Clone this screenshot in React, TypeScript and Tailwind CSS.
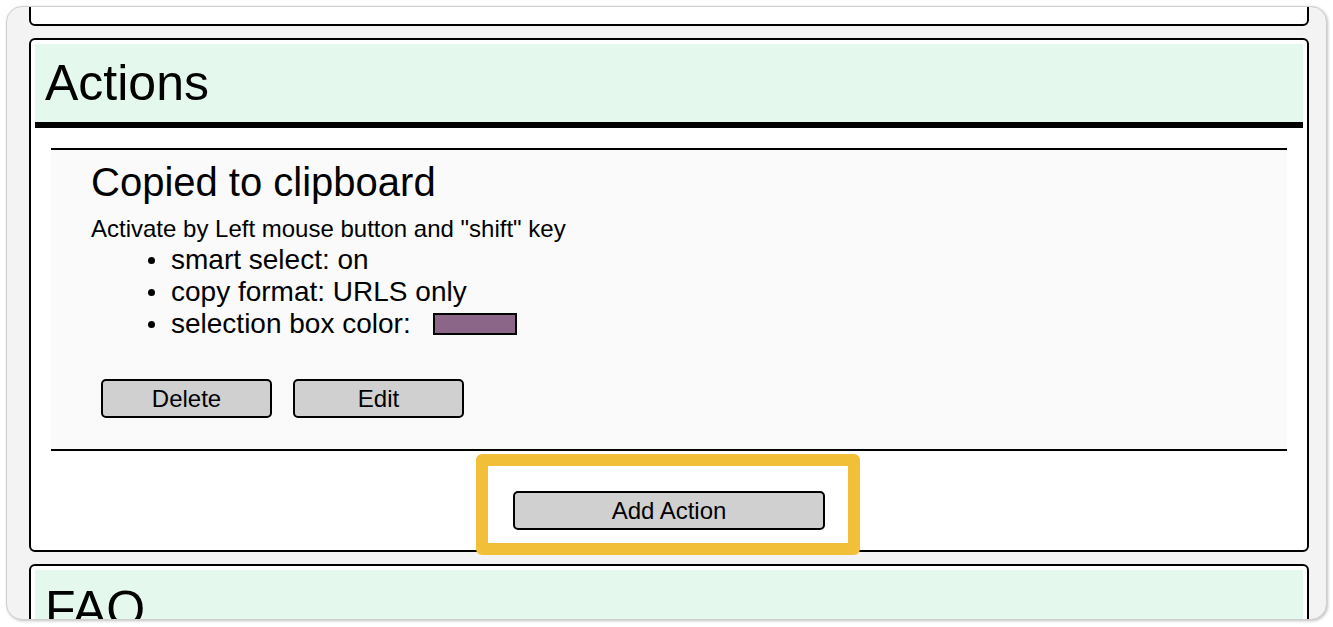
import React from "react";

const font = { fontFamily: "'Liberation Sans', Arial, sans-serif" };

function Bullet({ children }: { children: React.ReactNode }) {
  return (
    <li className="flex items-center h-[32px]">
      <span className="w-[7px] h-[7px] rounded-full bg-black ml-[57px] mr-[16px] shrink-0" />
      {children}
    </li>
  );
}

function Btn({ children, w }: { children: React.ReactNode; w: string }) {
  return (
    <button
      className={`${w} h-[39px] border-2 border-black rounded-[5px] bg-[#d0d0d0] text-[24px] leading-[35px] text-black text-center`}
    >
      {children}
    </button>
  );
}

export default function App() {
  return (
    <div className="w-[1333px] h-[627px] bg-white pt-[6px] pl-[6px] pr-[6px] pb-[7px]" style={font}>
      <div className="h-full rounded-[16px] border border-[#cfcfcf] bg-[#f3f3f3] overflow-hidden shadow-[1px_1px_3px_rgba(0,0,0,0.25)] pl-[22px] pr-[17px]">
        {/* top card, scrolled mostly out of view */}
        <div className="h-[100px] -mt-[81px] border-2 border-black rounded-[6px] bg-white" />

        {/* Actions card */}
        <div className="mt-[12px] border-2 border-black rounded-[6px] bg-white p-[4px]">
          <div className="h-[84px] bg-[#e4f8ee] border-b-[6px] border-black pl-[10px]">
            <h1 className="text-[50px] leading-[78px] text-black">Actions</h1>
          </div>

          <div className="mt-[20px] mx-[16px] border-t-2 border-b-2 border-black bg-[#fafafa] pt-[9px] pb-[31px] pl-[40px]">
            <h2 className="text-[40px] leading-[46px] text-black">Copied to clipboard</h2>
            <p className="mt-[10px] text-[24px] leading-[28px] text-black">
              Activate by Left mouse button and "shift" key
            </p>
            <ul className="mt-[1px] text-[28px] leading-[32px] text-black">
              <Bullet>smart select: on</Bullet>
              <Bullet>copy format: URLS only</Bullet>
              <Bullet>
                selection box color:
                <span className="inline-block ml-[22px] w-[84px] h-[22px] border-2 border-black bg-[#8b6688]" />
              </Bullet>
            </ul>
            <div className="mt-[39px] ml-[10px] flex gap-[21px]">
              <Btn w="w-[171px]">Delete</Btn>
              <Btn w="w-[171px]">Edit</Btn>
            </div>
          </div>

          <div className="flex justify-center mt-[40px] mb-[16px]">
            <div className="relative">
              <Btn w="w-[312px]">Add Action</Btn>
              <div className="absolute left-[-37px] top-[-37px] w-[384px] h-[101px] border-[12px] border-[#f2c038] rounded-[6px] z-10 pointer-events-none" />
            </div>
          </div>
        </div>

        {/* FAQ card */}
        <div className="mt-[12px] border-2 border-black rounded-[6px] bg-white p-[4px]">
          <div className="h-[84px] bg-[#e4f8ee] border-b-[6px] border-black pl-[10px]">
            <h1 className="text-[50px] leading-[78px] text-black">FAQ</h1>
          </div>
        </div>
      </div>
    </div>
  );
}
